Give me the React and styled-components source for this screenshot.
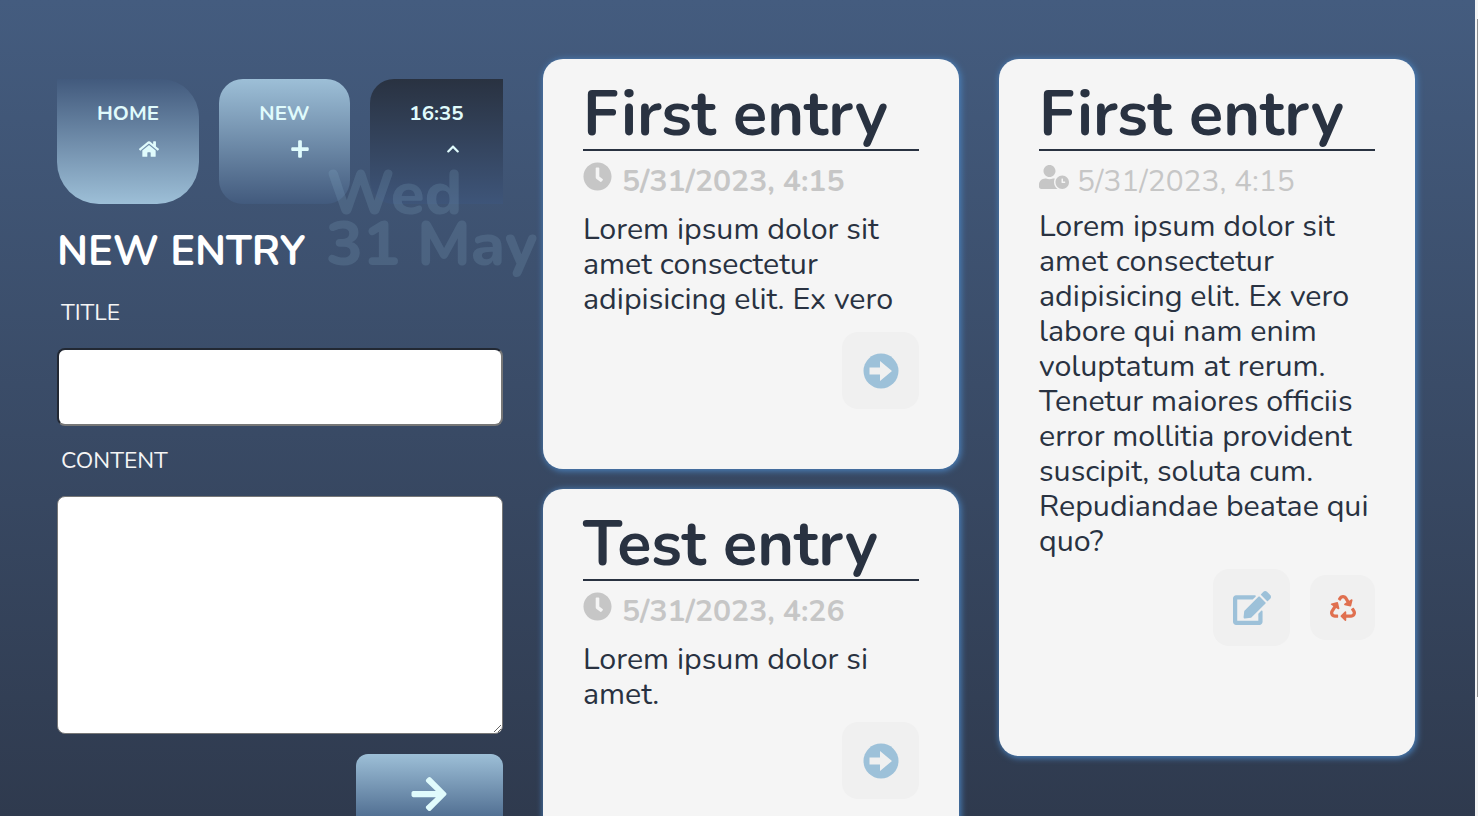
import React from "react";
import styled, { createGlobalStyle } from "styled-components";
import { FaHome, FaPlus, FaChevronUp, FaArrowRight, FaClock, FaUserClock, FaEdit, FaRecycle } from "react-icons/fa";

const font = `"Nunito", "Noto Sans", "Open Sans", sans-serif`;

const Global = createGlobalStyle`
  html { height: 100%; }
  body {
    margin: 0;
    font-family: ${font};
    background: #2f3a4e;
  }
`;

const Page = styled.div`
  box-sizing: border-box;
  min-height: 816px;
  height: 955px;
  background: linear-gradient(180deg, #445c7f 0, #2f3a4e 816px);
  padding: 59px 60px 0 57px;
  display: grid;
  grid-template-columns: 446px 416px 416px;
  column-gap: 40px;
  align-items: start;
`;

const ScrollTrack = styled.div`
  position: fixed;
  top: 0;
  right: 0;
  bottom: 0;
  width: 3px;
  background: #f4f4f4;
`;

const ScrollThumb = styled.div`
  position: absolute;
  top: 19px;
  right: 0;
  width: 1px;
  height: 678px;
  background: #8f8f8f;
`;

const Side = styled.aside`
  padding-top: 20px;
  display: flex;
  flex-direction: column;
`;

const Nav = styled.nav`
  position: relative;
  display: flex;
  gap: 20px;
  height: 125px;
`;

const NavItem = styled.a`
  box-sizing: border-box;
  width: ${(p) => p.$w}px;
  height: 125px;
  padding-top: 21px;
  display: flex;
  flex-direction: column;
  align-items: center;
  color: #e0fbfc;
  font-size: 20.5px;
  font-weight: 700;
  line-height: 27px;
  border-radius: ${(p) => p.$radius};
  background: ${(p) => p.$bg};
`;

const NavIcon = styled.span`
  display: flex;
  align-self: flex-start;
  margin-left: ${(p) => p.$left}px;
  margin-top: ${(p) => p.$top ?? 12}px;
  font-size: ${(p) => p.$size}px;
`;

const DateStamp = styled.div`
  position: absolute;
  left: 269px;
  top: 90px;
  font-size: 61.5px;
  font-weight: 800;
  line-height: 51px;
  color: rgba(152, 193, 217, 0.16);
  white-space: nowrap;
  pointer-events: none;
`;

const Heading = styled.h2`
  margin: 23px 0 0 0;
  color: #fff;
  font-size: 41.5px;
  font-weight: 700;
  line-height: 50px;
`;

const Label = styled.label`
  display: block;
  margin: ${(p) => p.$top}px 0 0 4px;
  color: #f5f5f5;
  font-size: 22.8px;
  line-height: 30px;
`;

const TitleInput = styled.input`
  display: block;
  box-sizing: border-box;
  width: 446px;
  height: 78px;
  margin-top: 20px;
  background: #fff;
  border: 2px solid #222833;
  border-bottom-color: #777;
  border-right-color: #777;
  border-radius: 8px;
`;

const ContentInput = styled.textarea`
  display: block;
  box-sizing: border-box;
  width: 446px;
  height: 238px;
  margin-top: 20px;
  background: #fff;
  border: 1px solid #777;
  border-radius: 8px;
  resize: vertical;
`;

const Submit = styled.button`
  align-self: flex-end;
  margin-top: 20px;
  width: 147px;
  height: 80px;
  flex: none;
  border: 0;
  border-radius: 12px;
  padding: 0 2px 0 0;
  color: #e0fbfc;
  font-size: 40px;
  display: flex;
  align-items: center;
  justify-content: center;
  background: linear-gradient(180deg, #9dbfd7 0, #3d5a80 100%);
`;

const Column = styled.section`
  display: flex;
  flex-direction: column;
  gap: 20px;
`;

const Card = styled.article`
  box-sizing: border-box;
  height: ${(p) => p.$h}px;
  padding: 20px 40px 0 40px;
  background: #f5f5f5;
  border-radius: 20px;
  box-shadow: 1px 1px 6px 1px #4a80bb;
  color: #293241;
  display: flex;
  flex-direction: column;
`;

const CardTitle = styled.h1`
  margin: 0;
  height: 70px;
  border-bottom: 2px solid #293241;
  font-size: 63px;
  font-weight: 700;
  line-height: 70px;
  color: #293241;
  white-space: nowrap;
`;

const Meta = styled.div`
  display: flex;
  align-items: flex-start;
  gap: ${(p) => p.$gap}px;
  margin-top: ${(p) => p.$top}px;
  height: 40px;
  color: ${(p) => p.$color};
  font-size: ${(p) => p.$size}px;
  font-weight: ${(p) => p.$weight};
  line-height: 40px;
  svg { flex: none; margin-top: ${(p) => p.$iconTop}px; font-size: ${(p) => p.$iconSize}px; }
`;

const Body = styled.p`
  margin: ${(p) => p.$top}px 0 0;
  font-size: 30.4px;
  line-height: 35px;
  color: #293241;
  font-weight: 400;
`;

const Actions = styled.div`
  display: flex;
  justify-content: flex-end;
  align-items: center;
  gap: 20px;
  margin-top: ${(p) => p.$top}px;
`;

const IconButton = styled.button`
  width: ${(p) => p.$size}px;
  height: ${(p) => p.$size}px;
  border: 0;
  padding: 0;
  border-radius: 16px;
  background: #f0f0f0;
  color: ${(p) => p.$color};
  font-size: ${(p) => p.$icon}px;
  display: flex;
  align-items: center;
  justify-content: center;
`;

const CircleArrow = () => (
  <svg width="36" height="36" viewBox="0 0 36 36" aria-hidden="true">
    <circle cx="18" cy="18" r="17.5" fill="#9dc1d9" />
    <path d="M6.5 14.5H17V8l12 10-12 10v-6.5H6.5z" fill="#f0f0f0" />
  </svg>
);

const lorem3 = "Lorem ipsum dolor sit amet consectetur adipisicing elit. Ex vero";
const loremFull = "Lorem ipsum dolor sit amet consectetur adipisicing elit. Ex vero labore qui nam enim voluptatum at rerum. Tenetur maiores officiis error mollitia provident suscipit, soluta cum. Repudiandae beatae qui quo?";

export default function App() {
  return (
    <>
      <Global />
      <Page>
        <Side>
          <Nav>
            <NavItem $w={142} $radius="0 38px 42px 42px" $bg="linear-gradient(180deg, #425a7d 0, #9dbfd7 100%)">
              HOME
              <NavIcon $left={82} $size={20}><FaHome /></NavIcon>
            </NavItem>
            <NavItem $w={131} $radius="24px" $bg="linear-gradient(180deg, #9dbfd7 0, #425a7d 100%)">
              NEW
              <NavIcon $left={71} $size={20}><FaPlus /></NavIcon>
            </NavItem>
            <NavItem $w={133} $radius="24px 0 0 24px" $bg="linear-gradient(180deg, #293241 0, #3e5579 100%)">
              16:35
              <NavIcon $left={76} $size={14} $top={15}><FaChevronUp /></NavIcon>
            </NavItem>
            <DateStamp>Wed<br />31 May</DateStamp>
          </Nav>
          <Heading>NEW ENTRY</Heading>
          <Label $top={21}>TITLE</Label>
          <TitleInput />
          <Label $top={20}>CONTENT</Label>
          <ContentInput />
          <Submit><FaArrowRight /></Submit>
        </Side>
        <Column>
          <Card $h={410}>
            <CardTitle>First entry</CardTitle>
            <Meta $gap={10} $top={11} $weight={700} $size={30.1} $color="#c6c6c6" $iconTop={0} $iconSize={29}><FaClock />5/31/2023, 4:15</Meta>
            <Body $top={10}>{lorem3}</Body>
            <Actions $top={15}>
              <IconButton $size={77} $color="#9dc1d9"><CircleArrow /></IconButton>
            </Actions>
          </Card>
          <Card $h={410}>
            <CardTitle>Test entry</CardTitle>
            <Meta $gap={10} $top={11} $weight={700} $size={30.1} $color="#c6c6c6" $iconTop={0} $iconSize={29}><FaClock />5/31/2023, 4:26</Meta>
            <Body $top={10}>Lorem ipsum dolor si amet.</Body>
            <Actions $top={10}>
              <IconButton $size={77} $color="#9dc1d9"><CircleArrow /></IconButton>
            </Actions>
          </Card>
        </Column>
        <Card $h={697}>
          <CardTitle>First entry</CardTitle>
          <Meta $gap={8} $top={11} $weight={400} $size={29.9} $color="#c6c6c6" $iconTop={0} $iconSize={30}><FaUserClock />5/31/2023, 4:15</Meta>
          <Body $top={7}>{loremFull}</Body>
          <Actions $top={10}>
            <IconButton $size={77} $color="#9dc1d9" $icon={38}><FaEdit /></IconButton>
            <IconButton $size={65} $color="#e07050" $icon={26}><FaRecycle /></IconButton>
          </Actions>
        </Card>
      </Page>
      <ScrollTrack><ScrollThumb /></ScrollTrack>
    </>
  );
}
